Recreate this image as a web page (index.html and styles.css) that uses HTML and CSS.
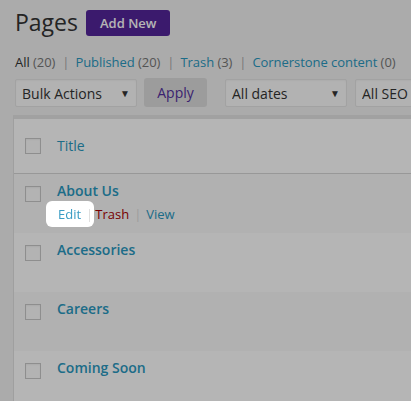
FILE: index.html
```html
<!DOCTYPE html>
<html lang="en">

<head>
    <meta charset="UTF-8">
    <meta name="viewport" content="width=device-width, initial-scale=1.0">
    <title>Pages</title>
    <link rel="stylesheet" href="styles.css">
</head>

<body>
    <div class="wrap">
        <!-- Cabecera -->
        <div class="page-head">
            <h1>Pages</h1>
            <a href="#" class="add-new">Add New</a>
        </div>

        <ul class="subsubsub">
            <li><a href="#" class="current">All <span class="count">(20)</span></a><span class="bar">|</span></li>
            <li><a href="#">Published <span class="count">(20)</span></a><span class="bar">|</span></li>
            <li><a href="#">Trash <span class="count">(3)</span></a><span class="bar">|</span></li>
            <li><a href="#">Cornerstone content <span class="count">(0)</span></a></li>
        </ul>

        <!-- Filtros -->
        <div class="tablenav">
            <div class="select-box bulk">
                <select>
                    <option>Bulk Actions</option>
                    <option>Edit</option>
                    <option>Move to Trash</option>
                </select>
            </div>
            <button type="button" class="apply">Apply</button>
            <div class="select-box dates">
                <select>
                    <option>All dates</option>
                </select>
            </div>
            <div class="select-box seo">
                <select>
                    <option>All SEO Scores</option>
                </select>
            </div>
        </div>

        <!-- Tabla de paginas -->
        <div class="list-table">
            <div class="list-row list-head">
                <div class="check-cell"><input type="checkbox"></div>
                <div class="title-cell"><a href="#" class="col-title">Title</a></div>
            </div>
            <div class="list-row alt">
                <div class="check-cell"><input type="checkbox"></div>
                <div class="title-cell">
                    <a href="#" class="row-title">About Us</a>
                    <div class="row-actions"><span class="edit spotlight"><a href="#">Edit</a><span class="sep">|</span></span><span class="trash"><a href="#">Trash</a><span class="sep">|</span></span><span class="view"><a href="#">View</a></span></div>
                </div>
            </div>
            <div class="list-row">
                <div class="check-cell"><input type="checkbox"></div>
                <div class="title-cell"><a href="#" class="row-title">Accessories</a></div>
            </div>
            <div class="list-row alt">
                <div class="check-cell"><input type="checkbox"></div>
                <div class="title-cell"><a href="#" class="row-title">Careers</a></div>
            </div>
            <div class="list-row">
                <div class="check-cell"><input type="checkbox"></div>
                <div class="title-cell"><a href="#" class="row-title">Coming Soon</a></div>
            </div>
        </div>
    </div>

    <!-- Capa oscura del tour -->
    <div class="overlay"></div>
</body>

</html>
```

FILE: styles.css
```css
body {
    font-family: "Open Sans", sans-serif;
    margin: 0;
    background-color: #f1f1f1;
    color: #444;
    overflow: hidden;
}

a {
    color: #2a98c0;
    text-decoration: none;
}

.wrap {
    width: 560px;
    padding: 10px 0 0 14px;
}

.page-head {
    display: flex;
    align-items: center;
    gap: 8px;
    height: 26px;
}

h1 {
    font-size: 23px;
    font-weight: 400;
    line-height: 26px;
    margin: -3px 0 0 1px;
    color: #333;
}

.add-new {
    display: block;
    background: #54259a;
    color: #fff;
    font-size: 13px;
    font-weight: 600;
    line-height: 26px;
    padding: 0 14px;
    border-radius: 3px;
}

.subsubsub {
    list-style: none;
    margin: 17px 0 0 1px;
    padding: 0;
    display: flex;
    font-size: 13px;
    line-height: 18px;
    letter-spacing: -0.05px;
}

.subsubsub .current {
    color: #333;
}

.subsubsub .count {
    color: #777;
}

.subsubsub .bar {
    color: #aaa;
    margin: 0 6px 0 7px;
}

.tablenav {
    display: flex;
    margin-top: 8px;
    height: 28px;
}

.select-box {
    position: relative;
    height: 28px;
}

.select-box select {
    appearance: none;
    -webkit-appearance: none;
    height: 28px;
    width: 100%;
    border: 1px solid #e4e4e4;
    border-radius: 2px;
    background: #fbfbfb;
    font-family: "Open Sans", sans-serif;
    font-size: 14px;
    color: #333;
    padding: 0 6px;
    box-shadow: inset 0 1px 2px rgba(0, 0, 0, 0.04);
}

.select-box::after {
    content: "\25BC";
    position: absolute;
    right: 7px;
    top: 7px;
    font-size: 10px;
    color: #333;
    pointer-events: none;
}

.bulk {
    width: 122px;
    margin-left: 1px;
}

.dates {
    width: 122px;
    margin-left: 18px;
}

.seo {
    width: 150px;
    margin-left: 8px;
}

.apply {
    margin-left: 7px;
    width: 63px;
    height: 29px;
    margin-top: -1px;
    border: none;
    border-radius: 3px;
    background: #dcdcdc;
    color: #54309e;
    font-family: "Open Sans", sans-serif;
    font-size: 14px;
    cursor: pointer;
}

.list-table {
    margin-top: 8px;
    margin-left: -1px;
    background: #fff;
    border-left: 1px solid #e1e1e1;
    border-top: 4px solid #e3e3e3;
}

.list-row {
    display: flex;
    min-height: 59px;
    box-sizing: border-box;
}

.list-row.alt {
    background: #f9f9f9;
}

.list-head {
    min-height: 55px;
    align-items: center;
    border-bottom: 1px solid #d6d6d6;
}

.check-cell {
    width: 43px;
    padding-left: 11px;
    box-sizing: border-box;
    flex: none;
}

.list-row:not(.list-head) .check-cell {
    padding-top: 12px;
}

input[type="checkbox"] {
    appearance: none;
    -webkit-appearance: none;
    width: 16px;
    height: 16px;
    margin: 0;
    display: block;
    border: 1px solid #c9c9c9;
    background: #fdfdfd;
    box-shadow: inset 0 1px 2px rgba(0, 0, 0, 0.06);
}

.title-cell {
    font-size: 14px;
    line-height: 19.6px;
}

.list-row:not(.list-head) .title-cell {
    padding-top: 7px;
}

.row-title {
    font-weight: 600;
}

.row-actions {
    font-size: 13px;
    line-height: 18px;
    margin-top: 4px;
    margin-left: 1px;
}

.row-actions .sep {
    color: #ddd;
    margin-left: 5px;
}

.row-actions .trash {
    margin-left: 2px;
}

.row-actions .view {
    margin-left: 5px;
}

.row-actions .trash a {
    color: #a00;
}

.overlay {
    position: fixed;
    inset: 0;
    background: rgba(0, 0, 0, 0.29);
    z-index: 100;
}

.spotlight {
    position: relative;
    z-index: 101;
    background: #fff;
    border-radius: 6px;
    padding: 4px 1px 4px 12px;
    margin-left: -12px;
    margin-right: -1px;
}

.spotlight a {
    color: #3a9cc4;
}
```
